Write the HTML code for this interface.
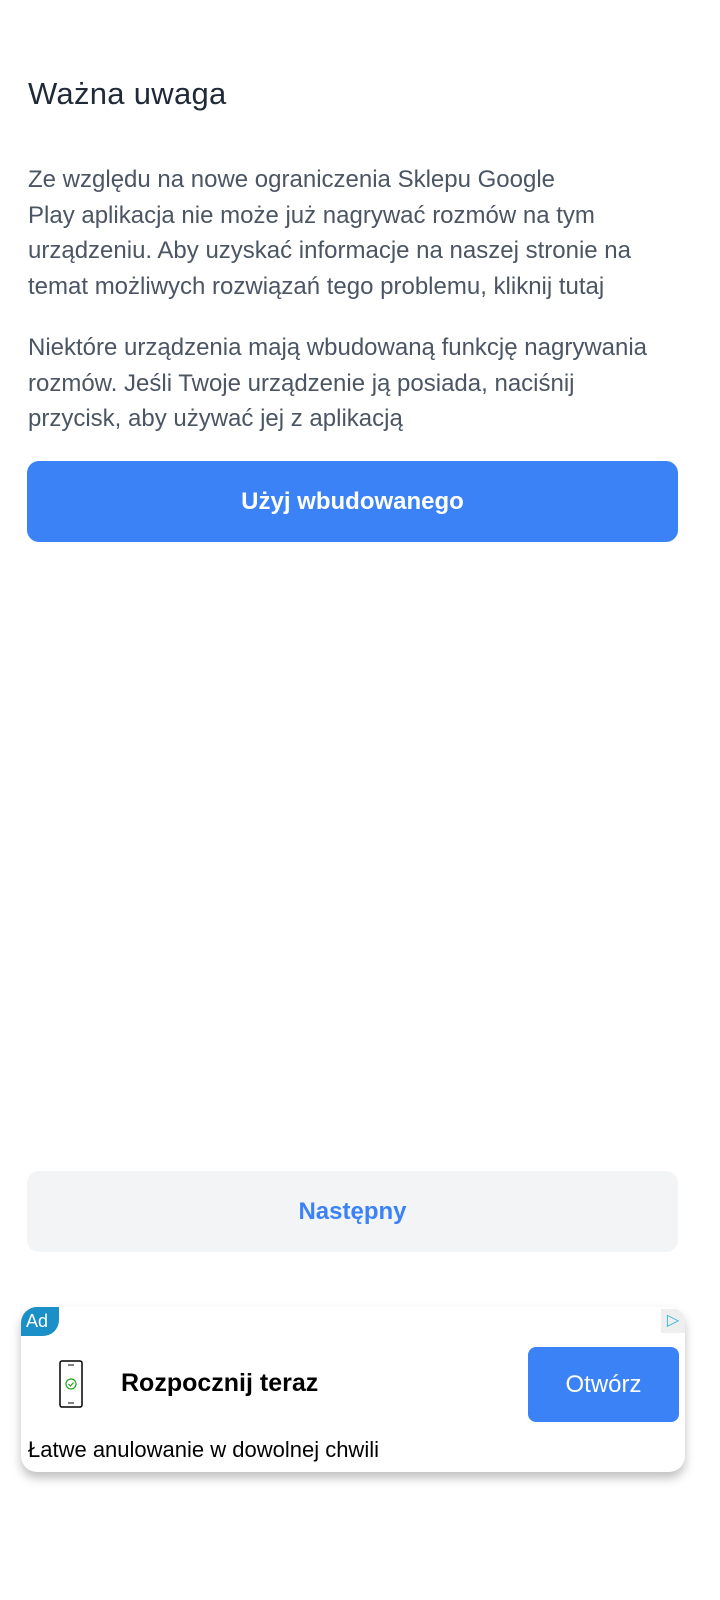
<!DOCTYPE html>
<html style="width:720px;overflow:hidden"><head><meta charset="utf-8"><style>
body{margin:0;width:720px;height:1600px;background:#fff;font-family:"Liberation Sans",sans-serif;position:relative;overflow:hidden}
.t{position:absolute;left:28px;top:76px;font-size:31px;color:#1f2937;letter-spacing:0.3px}
.p{position:absolute;left:28px;width:680px;font-size:24px;line-height:35.6px;color:#4b5563;white-space:nowrap}
.btn{position:absolute;left:27px;width:651px;height:81px;border-radius:12px;display:flex;align-items:center;justify-content:center;font-size:24px;font-weight:bold}
.ad{position:absolute;left:21px;top:1307px;width:664px;height:165px;border-radius:16px;background:#fff;box-shadow:0 6px 10px rgba(0,0,0,0.25);overflow:hidden}
</style></head><body>
<div class="t">Ważna uwaga</div>
<div class="p" style="top:162px">Ze względu na nowe ograniczenia Sklepu Google<br>Play aplikacja nie może już nagrywać rozmów na tym<br>urządzeniu. Aby uzyskać informacje na naszej stronie na<br>temat możliwych rozwiązań tego problemu, kliknij tutaj</div>
<div class="p" style="top:330px">Niektóre urządzenia mają wbudowaną funkcję nagrywania<br>rozmów. Jeśli Twoje urządzenie ją posiada, naciśnij<br>przycisk, aby używać jej z aplikacją</div>
<div class="btn" style="top:461px;background:#3b82f6;color:#fff">Użyj wbudowanego</div>
<div class="btn" style="top:1171px;background:#f3f4f6;color:#3b82f6">Następny</div>
<div class="ad">
<div style="position:absolute;left:0;top:0;width:38px;height:29px;background:#1a8fc8;border-radius:0 0 16px 0;color:#fff;font-size:18px;line-height:29px;padding-left:5px;box-sizing:border-box">Ad</div>
<div style="position:absolute;right:0;top:2px;width:24px;height:24px;background:#eee;color:#26b5d9;font-size:16px;text-align:center;line-height:24px">▷</div>
<svg style="position:absolute;left:38px;top:53px" width="24" height="48" viewBox="0 0 24 48"><rect x="1" y="1" width="22" height="46" rx="2" fill="none" stroke="#000" stroke-width="1.5"/><line x1="9" y1="5" x2="15" y2="5" stroke="#000"/><line x1="9" y1="43" x2="15" y2="43" stroke="#000"/><circle cx="12" cy="24" r="5" fill="none" stroke="#2a2" stroke-width="1.2"/><path d="M9.5 24l2 2 3-3.5" fill="none" stroke="#2a2" stroke-width="1.2"/></svg>
<div style="position:absolute;left:100px;top:62px;font-size:25px;font-weight:bold;color:#000">Rozpocznij teraz</div>
<div style="position:absolute;left:507px;top:40px;width:151px;height:75px;background:#3b82f6;border-radius:8px;color:#fff;font-size:24px;display:flex;align-items:center;justify-content:center">Otwórz</div>
<div style="position:absolute;left:7px;top:130px;font-size:22px;color:#000">Łatwe anulowanie w dowolnej chwili</div>
</div>
</body></html>
